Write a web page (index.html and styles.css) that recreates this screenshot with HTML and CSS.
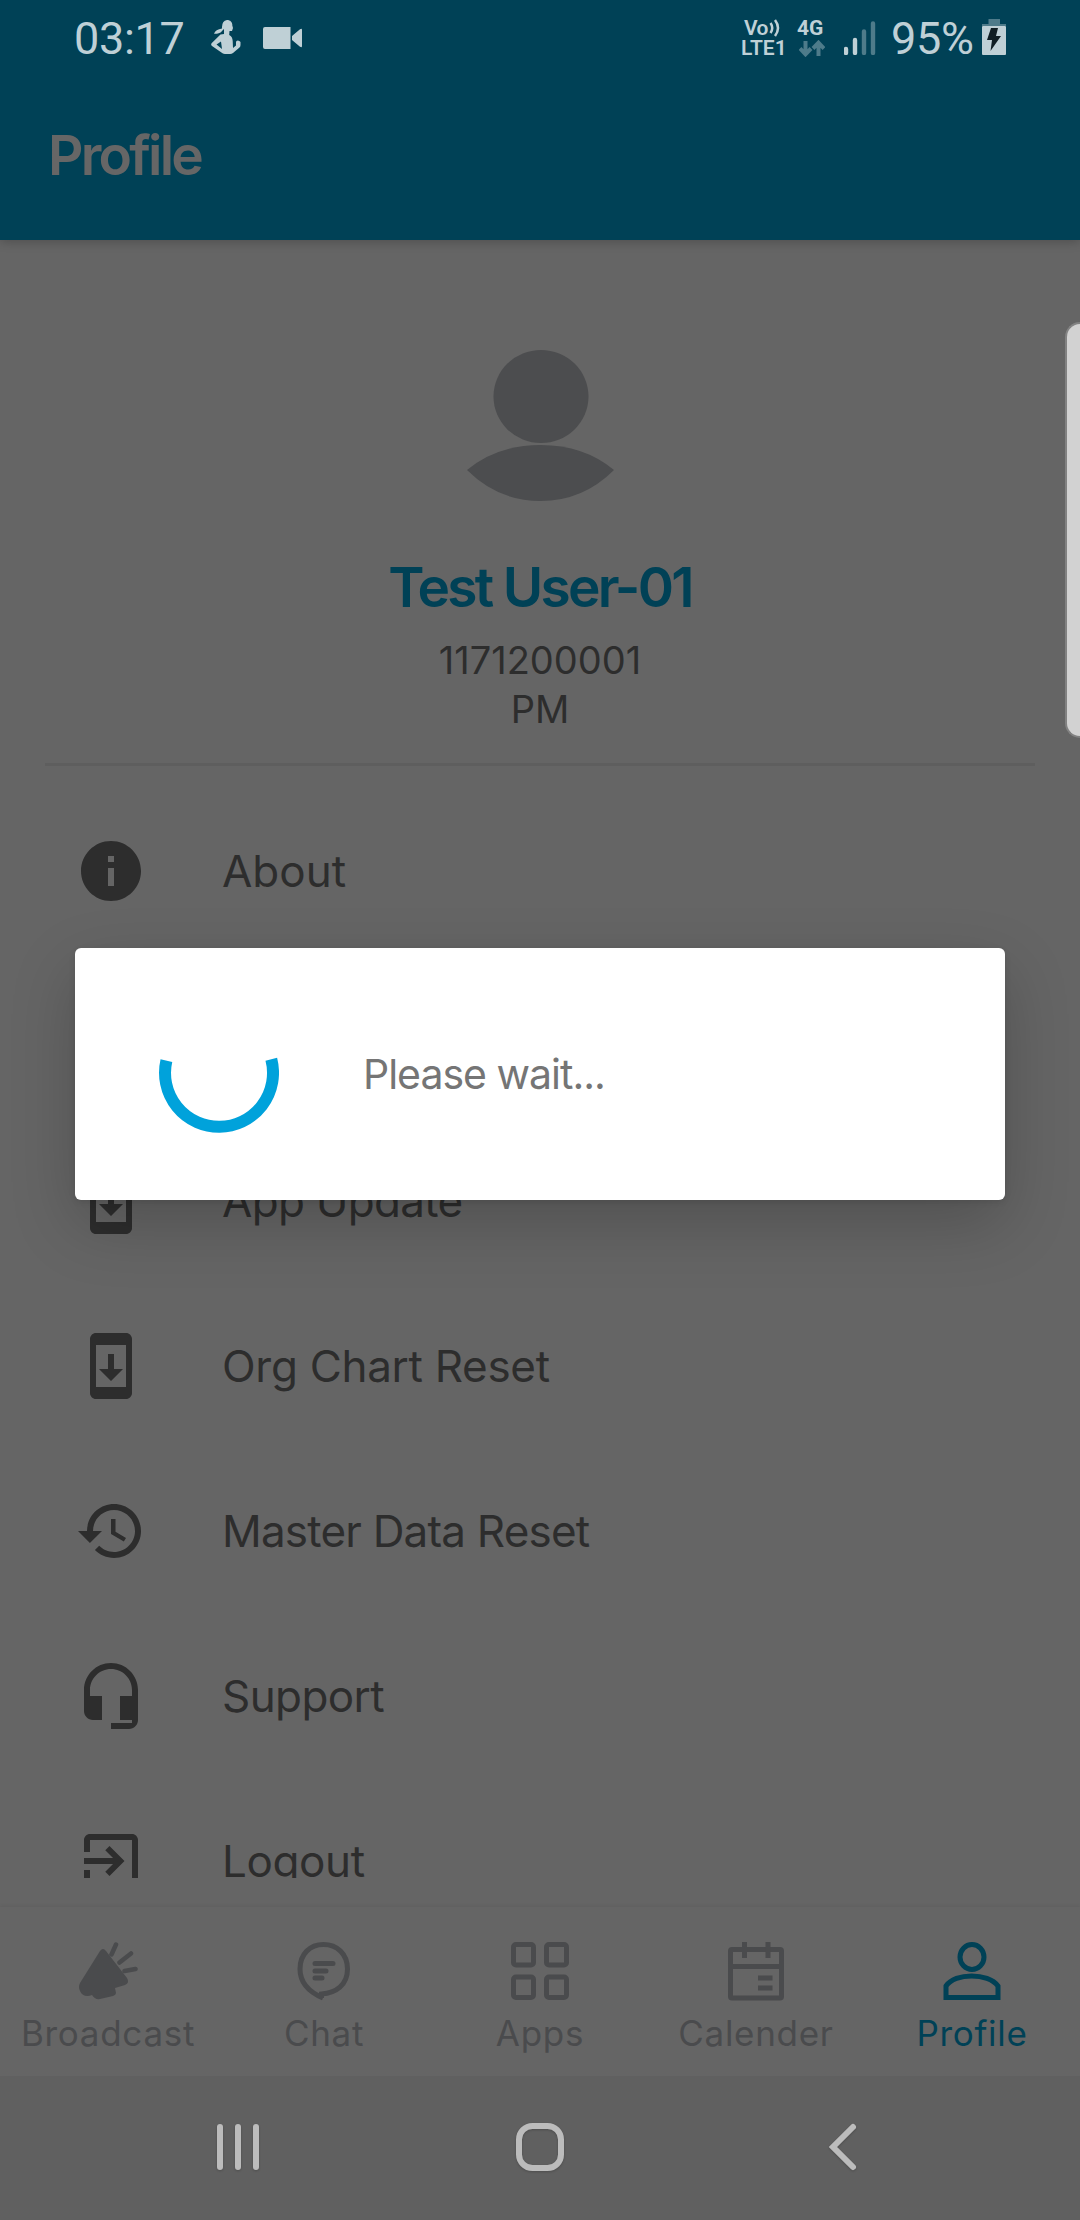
FILE: index.html
```html
<!DOCTYPE html>
<html lang="en">
<head>
<meta charset="utf-8">
<title>Profile</title>
<link rel="stylesheet" href="styles.css">
</head>
<body>
<div class="screen">
  <header class="header">
    <div class="status">
      <div class="status-left">
        <span class="clock">03:17</span>
        <svg class="figure" viewBox="0 0 30 34"><path d="M16 0C19.500 0 21.500 2.500 21.300 5.500L22 8L21 11H18.500L18.200 15C20.500 16 21.500 18 21.700 21L22 28L25 25.500V22Q25.100 20.500 26.800 20.500T29.500 22V25Q29.500 26.500 28.500 27.500L22 33Q20.800 34 19 34H14Q12.500 34 11.500 33.200L1 26Q-.6 24.600.8 23L9.500 14.500L13 14V9C10.500 11 10.500 14 3 13.800Q4.500 9.500 11 8.500Q10.500 1 16 0ZM10 21.500L5.500 24.500L11 29Z" fill-rule="evenodd"/></svg>
        <svg class="camera" viewBox="0 0 39 22"><path d="M2 0H27.500V22H2Q0 22 0 20V2Q0 0 2 0ZM29 9L37 2.200Q39 1 39 3V19Q39 21 37 19.800L29 13Z"/></svg>
      </div>
      <div class="status-right">
        <div class="volte">
          <div class="volte-line"><span class="vo">Vo</span><svg class="waves" viewBox="0 0 12 20"><path d="M1.500 5Q5 10 1.500 15M6 2Q12 10 6 18"/></svg></div>
          <span class="lte">LTE1</span>
        </div>
        <div class="network">
          <span class="gen">4G</span>
          <svg class="arrows" viewBox="0 0 26 17"><path d="M6.500 1V14M1 8.500L6.500 14.300L12 8.500M19.500 16V3M14 8.500L19.500 2.700L25 8.500"/></svg>
        </div>
        <svg class="signal" viewBox="0 0 32 34"><path d="M2 28V32M11 19V32"/><path class="dim" d="M20 10.500V32M29 2.500V32"/></svg>
        <span class="percent">95%</span>
        <svg class="battery" viewBox="0 0 24 36"><path class="cap" d="M6.500 0H18V5H24V7H0V5H6.500Z"/><rect y="7" width="24" height="29" rx="1"/><path class="bolt" d="M9 9H16L14 17H19L8.500 32L10 21H5Z"/></svg>
      </div>
    </div>
    <h1 class="title">Profile</h1>
  </header>

  <main class="content">
    <section class="user">
      <svg class="avatar" viewBox="0 0 147 151"><ellipse cx="74" cy="46.500" rx="47.500" ry="46.500"/><path d="M0 120Q30 95 73.500 95T147 120Q116 151 73.500 151T0 120Z"/></svg>
      <div class="name">Test User-01</div>
      <div class="detail number">1171200001</div>
      <div class="detail">PM</div>
    </section>
    <ul class="menu">
      <li class="row"><svg class="icon" viewBox="0 0 24 24"><path d="M12 2C6.480 2 2 6.480 2 12s4.480 10 10 10 10-4.480 10-10S17.520 2 12 2zm1 15h-2v-6h2v6zm0-8h-2V7h2v2z"/></svg><span class="label about">About</span></li>
      <li class="row"></li>
      <li class="row"><svg class="icon" viewBox="0 0 24 24"><path d="M17 1.010L7 1c-1.100 0-2 .9-2 2v18c0 1.100.9 2 2 2h10c1.100 0 2-.9 2-2V3c0-1.100-.9-1.990-2-1.990zM17 19H7V5h10v14zm-1-6h-3V8h-2v5H8l4 4 4-4z"/></svg><span class="label update">App Update</span></li>
      <li class="row"><svg class="icon" viewBox="0 0 24 24"><path d="M17 1.010L7 1c-1.100 0-2 .9-2 2v18c0 1.100.9 2 2 2h10c1.100 0 2-.9 2-2V3c0-1.100-.9-1.990-2-1.990zM17 19H7V5h10v14zm-1-6h-3V8h-2v5H8l4 4 4-4z"/></svg><span class="label org">Org Chart Reset</span></li>
      <li class="row"><svg class="icon" viewBox="0 0 24 24"><path d="M13 3c-4.970 0-9 4.030-9 9H1l3.890 3.890.07.14L9 12H6c0-3.870 3.130-7 7-7s7 3.130 7 7-3.130 7-7 7c-1.930 0-3.680-.79-4.940-2.060l-1.420 1.420C8.270 19.990 10.510 21 13 21c4.970 0 9-4.030 9-9s-4.030-9-9-9zm-1 5v5l4.280 2.540.72-1.210-3.500-2.080V8H12z"/></svg><span class="label master">Master Data Reset</span></li>
      <li class="row"><svg class="icon" viewBox="0 0 24 24"><path d="M12 1c-4.970 0-9 4.030-9 9v7c0 1.660 1.340 3 3 3h3v-8H5v-2c0-3.870 3.130-7 7-7s7 3.130 7 7v2h-4v8h4v1h-7v2h6c1.660 0 3-1.340 3-3V10c0-4.970-4.030-9-9-9z"/></svg><span class="label support">Support</span></li>
      <li class="row"><svg class="icon" viewBox="0 0 24 24"><path d="M10.090 15.590L11.500 17l5-5-5-5-1.410 1.410L12.670 11H3v2h9.670l-2.580 2.590zM19 3H5c-1.110 0-2 .9-2 2v4h2V5h14v14H5v-4H3v4c0 1.100.89 2 2 2h14c1.100 0 2-.9 2-2V5c0-1.100-.9-2-2-2z"/></svg><span class="label logout">Logout</span></li>
    </ul>
  </main>

  <nav class="tabs">
    <div class="tab"><svg class="tab-icon" viewBox="0 0 60 60"><path d="M22 10Q25 6 28 10L49 37Q52 42 47 44L37 47L38 52Q38 54 35 55L22 58Q17 59 14 54C9 56 4 55 2 50Q0 46 2 42Z"/><path class="ray" d="M33.500 13.500L38 3.500M41.500 21.500L53 12.500M46.500 30L57.500 28"/></svg><span class="tab-label broadcast">Broadcast</span></div>
    <div class="tab"><svg class="tab-icon line" viewBox="0 0 60 60"><path d="M27.500 57V53C42 52 53.500 44 53.500 28C53.500 13 43 3.500 29.500 3.500C16 3.500 6 13 6 28C6 41 15 51 29 57"/><path d="M21 22.500H39M21 30H32M21 37H28" stroke-linecap="round"/></svg><span class="tab-label chat">Chat</span></div>
    <div class="tab"><svg class="tab-icon line" viewBox="0 0 60 60"><rect x="3.500" y="3.500" width="20" height="20.500" rx="2.500"/><rect x="36.500" y="3.500" width="20" height="20.500" rx="2.500"/><rect x="3.500" y="36" width="20" height="20.500" rx="2.500"/><rect x="36.500" y="36" width="20" height="20.500" rx="2.500"/></svg><span class="tab-label apps">Apps</span></div>
    <div class="tab"><svg class="tab-icon line" viewBox="0 0 60 60"><rect x="4.500" y="8.500" width="51" height="48.500" rx="1.500"/><path d="M4 25.500H56M18.500 1V17M42 1V17M32 37H46.500M32 47H46.500"/></svg><span class="tab-label calender">Calender</span></div>
    <div class="tab active"><svg class="tab-icon line" viewBox="0 0 60 60"><ellipse cx="30" cy="16" rx="12" ry="12.500"/><path d="M4 56.500V45C13 31.500 46 31.500 56 45V56.500Z"/></svg><span class="tab-label profile">Profile</span></div>
  </nav>

  <div class="sysnav">
    <svg class="key" viewBox="0 0 54 54"><path d="M9 7V47M27 7V47M45 7V47"/></svg>
    <svg class="key" viewBox="0 0 54 54"><rect x="6" y="6" width="42" height="42" rx="13.500"/></svg>
    <svg class="key" viewBox="0 0 54 54"><path d="M38 7L18 27L38 47"/></svg>
  </div>

  <div class="dialog">
    <svg class="spinner" viewBox="0 0 120 120"><path d="M7.400 46.700A54 54 0 1 0 112.300 45.300"/></svg>
    <span class="wait">Please wait...</span>
  </div>
  <div class="edge-handle"></div>
</div>
</body>
</html>
```
FILE: styles.css
```css
* { box-sizing: border-box; }
body { margin: 0; }
.screen {
  position: relative;
  display: flex;
  flex-direction: column;
  width: 1080px;
  height: 2220px;
  overflow: hidden;
  background: #656565;
  color: #2d2d2d;
  font-family: Inter, "Liberation Sans", sans-serif;
  white-space: nowrap;
}
svg { display: block; flex: none; }

.header {
  position: relative;
  z-index: 1;
  flex: none;
  height: 240px;
  background: #004156;
  box-shadow: 0 2px 10px rgba(0, 0, 0, .22);
}
.status {
  display: flex;
  justify-content: space-between;
  height: 77px;
  padding: 0 74px 0 74px;
  color: #bfd0d6;
  fill: #bfd0d6;
  font-family: Roboto, sans-serif;
}
.status-left, .status-right { display: flex; align-items: flex-start; }
.clock, .percent { font-size: 45px; line-height: 77px; letter-spacing: -.3px; }
.clock { width: 137px; }
.figure { width: 30px; height: 34px; margin-top: 20px; }
.camera { width: 39px; height: 22px; margin: 27px 0 0 22px; }
.volte { width: 43px; margin-top: 18px; font-weight: 600; }
.volte-line { display: flex; height: 20px; padding-left: 3px; }
.vo { width: 25px; font-size: 21px; line-height: 20px; letter-spacing: -.6px; }
.waves { width: 12px; height: 20px; fill: none; stroke: #bfd0d6; stroke-width: 2.500; }
.lte { display: block; font-size: 21px; line-height: 20px; }
.network { width: 30px; margin: 18px 0 0 13px; }
.gen { display: block; font-size: 21px; line-height: 20px; font-weight: 700; }
.arrows { width: 26px; height: 17px; margin: 2px 0 0 2px; fill: none; stroke: #4e7b8a; stroke-width: 4; }
.signal { width: 32px; height: 34px; margin: 21px 0 0 17px; stroke: #bfd0d6; stroke-width: 4.400; stroke-linecap: round; }
.signal .dim { stroke: #4e7b8a; }
.percent { width: 91px; margin-left: 15px; }
.battery { width: 24px; height: 36px; margin-top: 19px; }
.battery .cap { fill: #4e7b8a; }
.battery .bolt { fill: #101e24; }
.title {
  margin: 0;
  padding-left: 48px;
  color: #666;
  font-size: 55px;
  font-weight: 600;
  line-height: 156px;
  letter-spacing: -2.800px;
}

.content { flex: none; height: 1638px; overflow: hidden; }
.user {
  display: flex;
  flex-direction: column;
  align-items: center;
  height: 526px;
  margin: 0 45px;
  padding-top: 110px;
  border-bottom: 3px solid #5e5e5e;
}
.avatar { width: 147px; height: 151px; fill: #4c4d4f; }
.name {
  margin-top: 50px;
  color: #004156;
  font-size: 55px;
  font-weight: 600;
  line-height: 72px;
  letter-spacing: -2.700px;
}
.detail { font-size: 38px; line-height: 49px; }
.number { margin-top: 13px; }
.menu { margin: 0; padding: 22px 0 0 75px; list-style: none; }
.row { display: flex; align-items: center; gap: 75px; height: 165px; }
.icon { width: 72px; height: 72px; fill: #2d2d2d; }
.label { font-size: 44px; line-height: 60px; letter-spacing: -.8px; }
.about { letter-spacing: 0; }
.update { letter-spacing: -.7px; }
.org { letter-spacing: -.3px; }
.support { letter-spacing: -.6px; }
.logout { letter-spacing: -.4px; }

.tabs {
  display: flex;
  flex: none;
  height: 169px;
  margin-top: 29px;
  box-shadow: 0 -1px 4px rgba(0, 0, 0, .07);
}
.tab {
  display: flex;
  flex-direction: column;
  align-items: center;
  width: 216px;
  padding-top: 34px;
  color: #4a4b4d;
}
.tab.active { color: #004156; }
.tab-icon { width: 60px; height: 60px; fill: currentColor; stroke: currentColor; stroke-width: 0; }
.tab-icon.line { fill: none; stroke-width: 5; }
.tab-icon .ray { stroke-width: 4.500; stroke-linecap: round; }
.tab-label { margin-top: 12px; font-size: 35px; line-height: 40px; letter-spacing: .7px; }

.sysnav {
  display: flex;
  flex: none;
  justify-content: space-between;
  height: 144px;
  padding: 44px 211px 0;
  background: #606060;
}
.key {
  width: 54px;
  height: 54px;
  fill: none;
  stroke: #bcbcbc;
  stroke-width: 6;
  stroke-linecap: round;
  filter: drop-shadow(0 1px 1px rgba(0, 0, 0, .2));
}

.dialog {
  position: absolute;
  z-index: 2;
  top: 948px;
  left: 75px;
  display: flex;
  align-items: center;
  gap: 84px;
  width: 930px;
  height: 252px;
  padding-left: 84px;
  border-radius: 6px;
  background: #fff;
  box-shadow: 0 24px 66px rgba(0, 0, 0, .2), 0 2px 6px rgba(0, 0, 0, .1);
}
.spinner { width: 120px; height: 120px; fill: none; stroke: #00a2db; stroke-width: 12; }
.wait { color: #757575; font-size: 41px; letter-spacing: -1px; }
.edge-handle {
  position: absolute;
  z-index: 2;
  top: 322px;
  right: 0;
  width: 15px;
  height: 416px;
  border: 2px solid #828282;
  border-right: 0;
  border-radius: 16px 0 0 16px;
  background: #d2d2d2;
}
```
